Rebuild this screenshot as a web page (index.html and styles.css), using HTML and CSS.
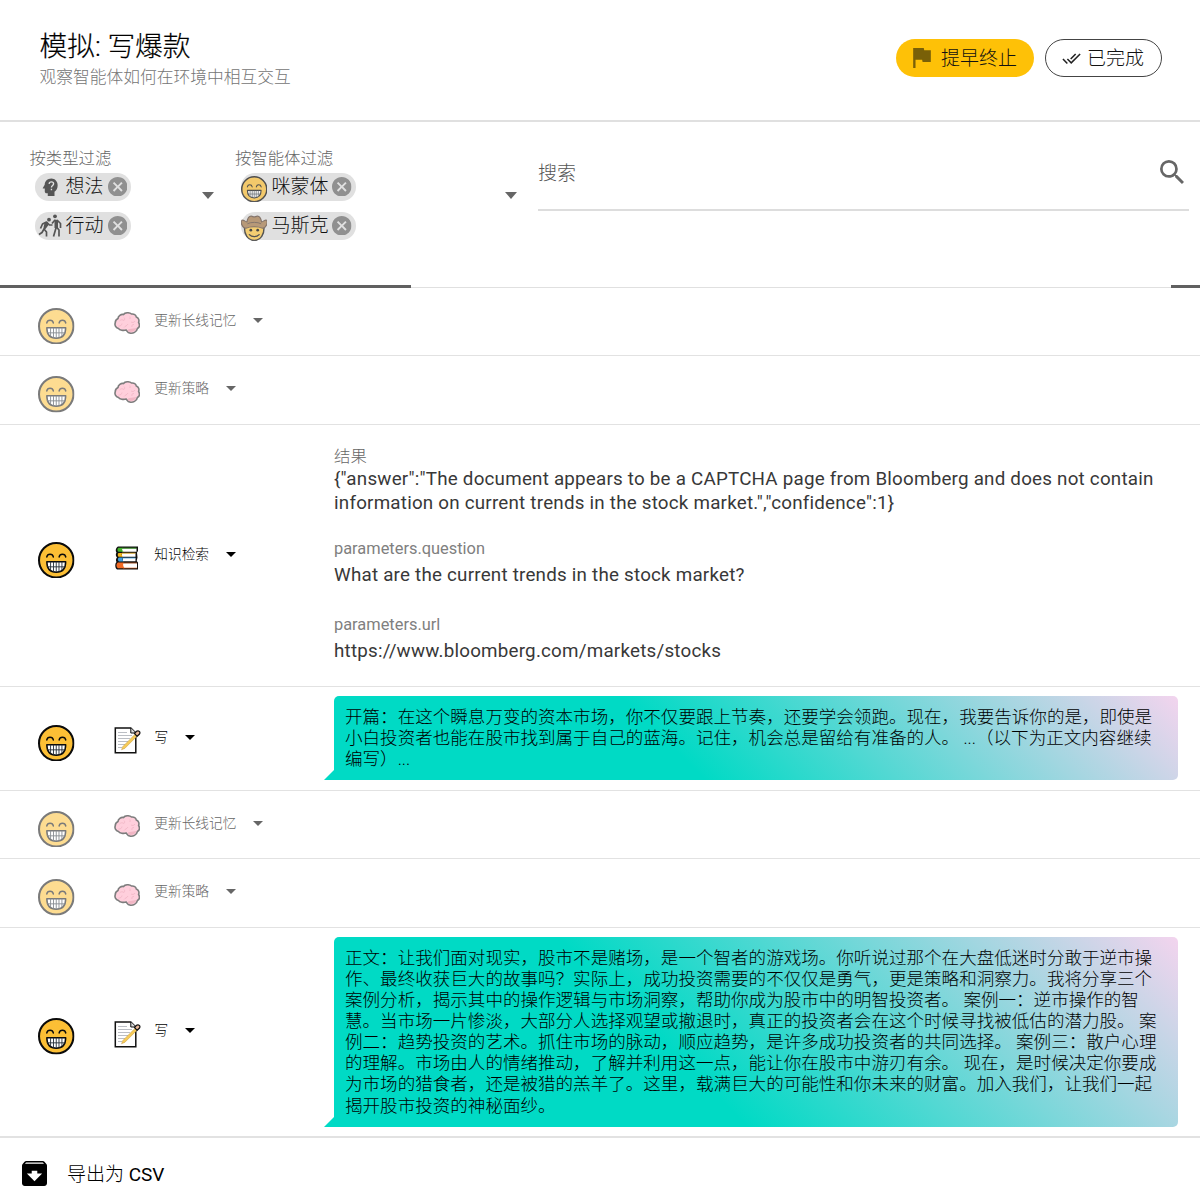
FILE: index.html
```html
<!DOCTYPE html>
<html lang="zh-CN">
<head>
<meta charset="utf-8">
<title>模拟: 写爆款</title>
<link rel="stylesheet" href="styles.css">
</head>
<body>
<svg class="defs" aria-hidden="true">
  <symbol id="grin" viewBox="0 0 36 36">
    <circle cx="18" cy="18" r="17" fill="#fcbf35" stroke="#0b0b0b" stroke-width="2"/>
    <path d="M8.600 14.800c.7-3.700 5.900-3.700 6.600 0M20.800 14.800c.7-3.700 5.900-3.700 6.600 0" fill="none" stroke="#0b0b0b" stroke-width="1.400" stroke-linecap="round"/>
    <path d="M8.700 19.500h18.600c0 6.500-3.300 10.300-9.300 10.300s-9.300-3.800-9.300-10.300z" fill="#fff" stroke="#0b0b0b" stroke-width="1.500" stroke-linejoin="round"/>
    <path d="M9 24.500h18M12.400 19.500v8.300M15.300 19.500v10M18 19.500v10.300M20.700 19.500v10M23.600 19.500v8.300" stroke="#26303a" stroke-width=".9"/>
  </symbol>
  <symbol id="cowboy" viewBox="0 0 27 27">
    <path d="M3.500 11c-.5 9 3.500 15 10 15s10.500-6 10-15z" fill="#fcc53f" stroke="#111" stroke-width="1.400"/>
    <path d="M6 7C7 2.500 8.500 1 10.500 1.200c1.200.1 2 .8 3 .8s1.800-.7 3-.8c2-.2 3.500 1.300 4.500 5.800 2-.2 3.300-2.500 5-1.700 1.500 2 .3 7.700-4 8.200-4.500-2-12.500-2-17 0C.7 13-.5 7.300 1 5.300c1.700-.8 3 1.500 5 1.700z" fill="#a57948" stroke="#5b4436" stroke-width="1.200"/>
    <path d="M6.500 9c3-2 11-2 14 0" fill="none" stroke="#5b4436" stroke-width="1"/>
    <circle cx="10" cy="15.500" r="1.400"/><circle cx="17" cy="15.500" r="1.400"/>
    <path d="M8.500 20c2.500 2.700 7.500 2.700 10 0" fill="none" stroke="#111" stroke-width="1.400" stroke-linecap="round"/>
  </symbol>
  <symbol id="brain" viewBox="0 0 26 22">
    <path d="M4 6.500C4 4 7 2 9.500 2.500 11 .3 15.500.3 17.500 2c2.500-.4 4.500 1 4.800 3 2.400.8 3.100 3.400 2.300 5.300 1.400 2.700.7 5.200-1.200 6.200-.8 3.700-4.300 5.200-7.800 4.500-1.700-.3-2.500-2-3.500-3-2.500.8-6.500.3-7.700-1.600C1.500 15.600.5 13 1.200 11 1.200 9 2.300 7.300 4 6.500z" fill="#ffa7c0" stroke="#111" stroke-width="1.600"/>
    <path d="M14.500 19.800c-1-1.500-.5-2.500 1-2.700 2.500-.4 5-1 7-1.200-1 3-4.200 4.500-8 3.900z" fill="#e67a94"/>
    <path d="M5.500 9c1.500-1.600 3-1.500 4.500-.5M10 5.500c1 1 .8 2 0 3M15.800 7c.7-1.500.2-2 0-2.500M21 9c-1 2-3 1.500-4 1M4.500 14c2 .2 3-.5 3.500-2.500M10 15.500c1-1.500 3-1.500 4-3.500M18 15c-.5-1.500 0-2.500 2-2.500" fill="none" stroke="#e67a94" stroke-width=".8"/>
  </symbol>
  <symbol id="books" viewBox="0 0 25 24">
    <path d="M4 .5h20v4.500l-1 1.500.5 5-.8 3.500 1.300 1.500V23.500H3C.8 22 .8 17.500 2.500 16c-.8-1-.8-3.500.5-4.500C1.500 10 1.500 8 2.500 6.500 1.200 5 1.800 1.500 4 .5z" fill="#111"/>
    <path d="M8 2.500h14.500v3.200H8zM8 7.200h13.500v3.500H8zM9 12h12.500v3.300H9zM9 17.200h14v4.800H9z" fill="#fff"/>
    <path d="M8.500 1.800H4.500C3 2.600 3 5 4.500 5.800h5C8 4.700 7.800 3 8.500 1.800z" fill="#44b32c"/>
    <path d="M8 6.900H4.500c-1 .8-1 2.900 0 3.800H9C7.700 9.500 7.500 8 8 6.900z" fill="#f1b31c"/>
    <path d="M9 11.500H5c-1.500.6-1.500 3.200 0 3.900h4.500C8.500 14.300 8.500 12.500 9 11.500z" fill="#3f9ee0"/>
    <path d="M9.500 16.500H4c-2 1-2 4.500 0 5.800h6.500C9 20.500 8.800 18 9.500 16.500z" fill="#f36b24"/>
    <path d="M8 2.200h14.500" stroke="#44b32c" stroke-width=".8"/><path d="M8 7.200h13.500" stroke="#f1b31c" stroke-width=".8"/><path d="M9 12h12.500" stroke="#3f9ee0" stroke-width=".8"/><path d="M9 17h14M9 22h14" stroke="#f36b24" stroke-width=".6"/>
  </symbol>
  <symbol id="memo" viewBox="0 0 27 27">
    <path d="M1.300 1h15.500l5 5v19.800H1.300z" fill="#fff" stroke="#111" stroke-width="1.500"/>
    <path d="M16.800 1v5h5" fill="#ddd" stroke="#111" stroke-width="1"/>
    <path d="M4 5.500h9M4 8.500h14M4 11.500h12M4 14.500h10M4 17.500h7M4 20.500h4" stroke="#a9adb5" stroke-width=".8"/>
    <path d="M7.500 22.800l1.300-3.300L21.300 7l2 1.900L10.800 21.400z" fill="#f6cb58" stroke="#b58a3c" stroke-width=".4"/>
    <path d="M20.500 6.500l2-2.200c2-1.500 4.500.8 2.800 3l-2.200 2z" fill="#e8b89a" stroke="#111" stroke-width="1.200"/>
  </symbol>
  <symbol id="cancel" viewBox="2 2 20 20">
    <path d="M12 2C6.470 2 2 6.470 2 12s4.470 10 10 10 10-4.470 10-10S17.530 2 12 2zm5 13.590L15.590 17 12 13.410 8.410 17 7 15.590 10.590 12 7 8.410 8.410 7 12 10.590 15.590 7 17 8.410 13.410 12 17 15.590z"/>
  </symbol>
</svg>

<header class="header">
  <div class="heading">
    <h1>模拟: 写爆款</h1>
    <p>观察智能体如何在环境中相互交互</p>
  </div>
  <div class="actions">
    <button class="pill pill-stop">
      <svg class="flag" viewBox="5 4 15 17"><path d="M14.400 6L14 4H5v17h2v-7h5.600l.4 2h7V6z"/></svg><span>提早终止</span>
    </button>
    <button class="pill pill-done">
      <svg class="done" viewBox="0 5 24 14"><path d="M18 7l-1.410-1.410-6.340 6.340 1.410 1.410L18 7zm4.240-1.410L11.660 16.170 7.480 12l-1.410 1.410L11.660 19l12-12-1.420-1.410zM.41 13.410L6 19l1.410-1.410L1.830 12 .41 13.410z"/></svg><span>已完成</span>
    </button>
  </div>
</header>

<section class="filters">
  <div class="select select-type">
    <div class="select-main">
      <div class="label">按类型过滤</div>
      <div class="chip"><svg class="psych" viewBox="3 2 17 20"><path d="M13 2.500C8.700 2.500 5.700 5.700 5.600 9.500L3.500 13c-.2.400 0 .8.500.8h1.700V17c0 1.100.9 2 2 2H9v3h7.500v-4.700C19 15.800 20 13 20 10c0-4.300-3-7.500-7-7.500z"/><path d="M10.500 8.500c.2-3 5-3 5 0 0 2-2.400 1.800-2.400 4M13.100 14v1.500" fill="none" stroke="#e0e0e0" stroke-width="1.500"/></svg><span>想法</span><svg class="x"><use href="#cancel"/></svg></div>
      <div class="chip"><svg class="people" viewBox="0 0 24 23"><g fill="none" stroke-width="1.700" stroke-linejoin="round"><path d="M9 10l-3 5L8.500 18v4.500M6 15l-2 3.500-3 2M2.500 14.500L4.500 10l4-2 3 3h3M18 6v8l-2.500 8.500M18.500 13l2.500 3v6.500M17 6l-3 3.500M19 6l3.500 3.500V14"/></g><path d="M6.500 9l3-1 1 3-3 4-2-1.500zM16.500 5.500l3.500.5V14h-3.500z"/><circle cx="11" cy="5.700" r="1.900"/><circle cx="17" cy="2.300" r="1.900"/></svg><span>行动</span><svg class="x"><use href="#cancel"/></svg></div>
    </div>
    <i class="caret"></i>
  </div>
  <div class="select select-agent">
    <div class="select-main">
      <div class="label">按智能体过滤</div>
      <div class="chip agent"><svg class="emoji"><use href="#grin"/></svg><span>咪蒙体</span><svg class="x"><use href="#cancel"/></svg></div>
      <div class="chip agent"><svg class="emoji"><use href="#cowboy"/></svg><span>马斯克</span><svg class="x"><use href="#cancel"/></svg></div>
    </div>
    <i class="caret"></i>
  </div>
  <div class="search">
    <span>搜索</span>
    <svg viewBox="3 3 17.500 17.500"><path d="M15.500 14h-.79l-.28-.27A6.471 6.471 0 0 0 16 9.500 6.500 6.500 0 1 0 9.500 16c1.610 0 3.090-.59 4.230-1.570l.27.28v.79l5 4.990L20.490 19l-4.990-5zm-6 0C7.010 14 5 11.990 5 9.500S7.010 5 9.500 5 14 7.010 14 9.500 11.990 14 9.500 14z"/></svg>
  </div>
  <div class="progress"><i></i><i></i></div>
</section>

<main>
  <div class="row small faded">
    <svg class="face"><use href="#grin"/></svg>
    <div class="event"><svg class="brain"><use href="#brain"/></svg><span>更新长线记忆</span><i class="caret"></i></div>
  </div>
  <div class="row small faded">
    <svg class="face"><use href="#grin"/></svg>
    <div class="event"><svg class="brain"><use href="#brain"/></svg><span>更新策略</span><i class="caret"></i></div>
  </div>
  <div class="row lookup">
    <svg class="face"><use href="#grin"/></svg>
    <div class="event"><svg class="books"><use href="#books"/></svg><span>知识检索</span><i class="caret"></i></div>
    <dl class="detail">
      <dt class="zh">结果</dt>
      <dd>{"answer":"The document appears to be a CAPTCHA page from Bloomberg and does not contain<br>information on current trends in the stock market.","confidence":1}</dd>
      <dt class="question">parameters.question</dt>
      <dd>What are the current trends in the stock market?</dd>
      <dt>parameters.url</dt>
      <dd>https://www.bloomberg.com/markets/stocks</dd>
    </dl>
  </div>
  <div class="row write">
    <svg class="face"><use href="#grin"/></svg>
    <div class="event"><svg class="memo"><use href="#memo"/></svg><span>写</span><i class="caret"></i></div>
    <div class="bubble">开篇：在这个瞬息万变的资本市场，你不仅要跟上节奏，还要学会领跑。现在，我要告诉你的是，即使是<br>小白投资者也能在股市找到属于自己的蓝海。记住，机会总是留给有准备的人。 ...（以下为正文内容继续<br>编写）...</div>
  </div>
  <div class="row small faded">
    <svg class="face"><use href="#grin"/></svg>
    <div class="event"><svg class="brain"><use href="#brain"/></svg><span>更新长线记忆</span><i class="caret"></i></div>
  </div>
  <div class="row small faded">
    <svg class="face"><use href="#grin"/></svg>
    <div class="event"><svg class="brain"><use href="#brain"/></svg><span>更新策略</span><i class="caret"></i></div>
  </div>
  <div class="row write">
    <svg class="face"><use href="#grin"/></svg>
    <div class="event"><svg class="memo"><use href="#memo"/></svg><span>写</span><i class="caret"></i></div>
    <div class="bubble">正文：让我们面对现实，股市不是赌场，是一个智者的游戏场。你听说过那个在大盘低迷时分敢于逆市操<br>作、最终收获巨大的故事吗？实际上，成功投资需要的不仅仅是勇气，更是策略和洞察力。我将分享三个<br>案例分析，揭示其中的操作逻辑与市场洞察，帮助你成为股市中的明智投资者。 案例一：逆市操作的智<br>慧。当市场一片惨淡，大部分人选择观望或撤退时，真正的投资者会在这个时候寻找被低估的潜力股。 案<br>例二：趋势投资的艺术。抓住市场的脉动，顺应趋势，是许多成功投资者的共同选择。 案例三：散户心理<br>的理解。市场由人的情绪推动，了解并利用这一点，能让你在股市中游刃有余。 现在，是时候决定你要成<br>为市场的猎食者，还是被猎的羔羊了。这里，载满巨大的可能性和你未来的财富。加入我们，让我们一起<br>揭开股市投资的神秘面纱。</div>
  </div>
</main>

<footer class="footer">
  <svg viewBox="3 3 18 18"><path d="M20.540 5.230l-1.390-1.680C18.880 3.210 18.470 3 18 3H6c-.47 0-.88.21-1.160.55L3.460 5.230C3.170 5.570 3 6.020 3 6.500V19c0 1.100.9 2 2 2h14c1.100 0 2-.9 2-2V6.500c0-.48-.17-.93-.46-1.270zM12 17.500L6.500 12H10v-2h4v2h3.500L12 17.500zM5.120 5l.81-1h12l.94 1H5.120z"/></svg>
  <span>导出为 <b>CSV</b></span>
</footer>
</body>
</html>
```
FILE: styles.css
```css
* { box-sizing: border-box; }
body {
  margin: 0;
  width: 1200px;
  height: 1195px;
  overflow: hidden;
  background: #fff;
  color: #000;
  font-family: Roboto, "Noto Sans CJK SC", sans-serif;
  font-weight: 300;
}
svg { display: block; flex: none; }
.defs { display: none; }
h1, p, dl, dd { margin: 0; }

.header {
  display: flex;
  justify-content: space-between;
  height: 121.500px;
  padding: 30px 38px 0 39.500px;
  border-bottom: 2px solid #e0e0e0;
}
h1 { font-size: 27.700px; font-weight: 300; line-height: 34px; -webkit-text-stroke: .2px #000; }
.heading p { font-size: 16.750px; line-height: 24px; margin-top: 1px; color: #757575; }
.actions { display: flex; gap: 11px; padding-top: 9.400px; }
.pill {
  display: flex;
  align-items: center;
  height: 38px;
  border: 0;
  border-radius: 20px;
  font: inherit;
  font-size: 19px;
  line-height: 37px;
  color: #111;
  white-space: nowrap;
}
.pill-stop { width: 138px; padding: 0 0 0 17px; gap: 10px; background: #fec107; }
.pill-done { width: 117px; padding: 0 0 0 16px; gap: 6px; background: #fff; border: 1px solid #444; }
.flag { width: 18px; height: 20px; fill: #796008; }
.done { width: 19px; height: 11px; fill: #222; }

.filters { position: relative; display: flex; height: 166.500px; padding-left: 29.400px; border-bottom: 1px solid #e0e0e0; }
.select { display: flex; justify-content: space-between; }
.select-type { width: 184.500px; margin-right: 21px; }
.select-agent { width: 282.500px; margin-right: 20.600px; }
.select-main { padding-top: 27px; }
.label { font-size: 16.400px; line-height: 20px; color: #666; margin-bottom: 4px; }
.chip {
  display: flex;
  align-items: center;
  width: 96px;
  height: 28px;
  margin: 0 0 11px 6px;
  padding: 0 4px 0 3px;
  border-radius: 14px;
  background: #e0e0e0;
  font-size: 19px;
  line-height: 27px;
  color: #111;
  white-space: nowrap;
}
.chip.agent { width: 115px; padding-left: 0; }
.chip .x { width: 19.500px; height: 19.500px; margin-left: auto; fill: #909090; }
.psych { width: 16px; height: 18px; margin: 0 7px 0 4px; fill: #555; }
.people { width: 24px; height: 23px; margin-right: 3px; fill: #555; }
.people g { stroke: #555; }
.chip .emoji { width: 26.500px; height: 26.500px; margin: 5px 4px 0 0; opacity: .68; }
.caret { flex: none; border: 6px solid transparent; border-top-color: #666; border-bottom: 0; }
.select .caret { margin-top: 70px; border-width: 7px 6.500px 0; }
.search {
  display: flex;
  justify-content: space-between;
  width: 651px;
  height: 89px;
  padding: 38.500px 5px 0 0;
  border-bottom: 2px solid #ddd;
  font-size: 19px;
  line-height: 27px;
  color: #555;
}
.search svg { width: 24px; height: 24px; fill: #666; }
.progress { position: absolute; left: 0; right: 0; bottom: -1px; display: flex; justify-content: space-between; }
.progress i { width: 411px; height: 3px; background: #606060; }
.progress i + i { width: 29px; }

.row { display: flex; align-items: center; height: 68px; padding-left: 38px; border-bottom: 1px solid #e2e2e2; }
.row + .row.small { height: 68.500px; }
.row.lookup { height: 262.500px; }
.row.write { height: auto; padding-top: 9.200px; padding-bottom: 9.400px; }
.row:last-child { border-bottom: 0; }
.face { width: 36.500px; height: 36.500px; margin-top: 9px; }
.event { display: flex; align-items: center; width: 259.500px; padding-left: 39.500px; font-size: 13.700px; line-height: 20px; }
.event span { margin: -3.500px 0 0 14.300px; }
.event .caret { border-width: 5px 5px 0; margin: -2.500px 0 0 17px; border-top-color: #000; }
.brain { width: 26px; height: 22px; margin-top: 3.500px; }
.faded .face, .faded .brain { opacity: .54; }
.faded .event span { color: #666; }
.faded .event .caret { border-top-color: #666; }
.books { width: 25px; height: 24px; margin: 5px 1px 0 0; }
.memo { width: 27px; height: 27px; margin-top: 4.500px; }
.row.write .event span { margin-left: 13.500px; }

.detail { font-weight: 400; white-space: nowrap; }
.detail dt { font-size: 16.400px; line-height: 24px; color: #808080; margin-top: 25px; }
.detail .question { margin-top: 21.500px; }
.detail dt.zh { margin-top: -2px; font-weight: 300; line-height: 21px; color: #666; }
.detail dd { font-size: 18.800px; line-height: 24.500px; letter-spacing: .220px; color: #383838; margin-top: 2px; }
.detail dt.zh + dd { margin-top: 0; }

.bubble {
  position: relative;
  width: 844px;
  padding: 11px 11px 10px;
  border-radius: 5px 5px 5px 0;
  background: linear-gradient(45deg, #00dac5 0%, #00dac5 40%, #f3d4ee 100%);
  color: #000;
  font-size: 17.560px;
  line-height: 21.080px;
  white-space: nowrap;
  text-spacing-trim: space-all;
}
.bubble::before {
  content: "";
  position: absolute;
  left: -10px;
  bottom: 0;
  border: 5px solid transparent;
  border-right-color: #00dac5;
  border-bottom-color: #00dac5;
}

.footer { display: flex; align-items: center; gap: 20px; height: 72px; padding-left: 22px; border-top: 2px solid #e2e2e2; font-size: 19px; }
.footer svg { width: 25px; height: 25px; }
.footer span { margin-top: -2px; }
.footer b { font-weight: 400; }
```
